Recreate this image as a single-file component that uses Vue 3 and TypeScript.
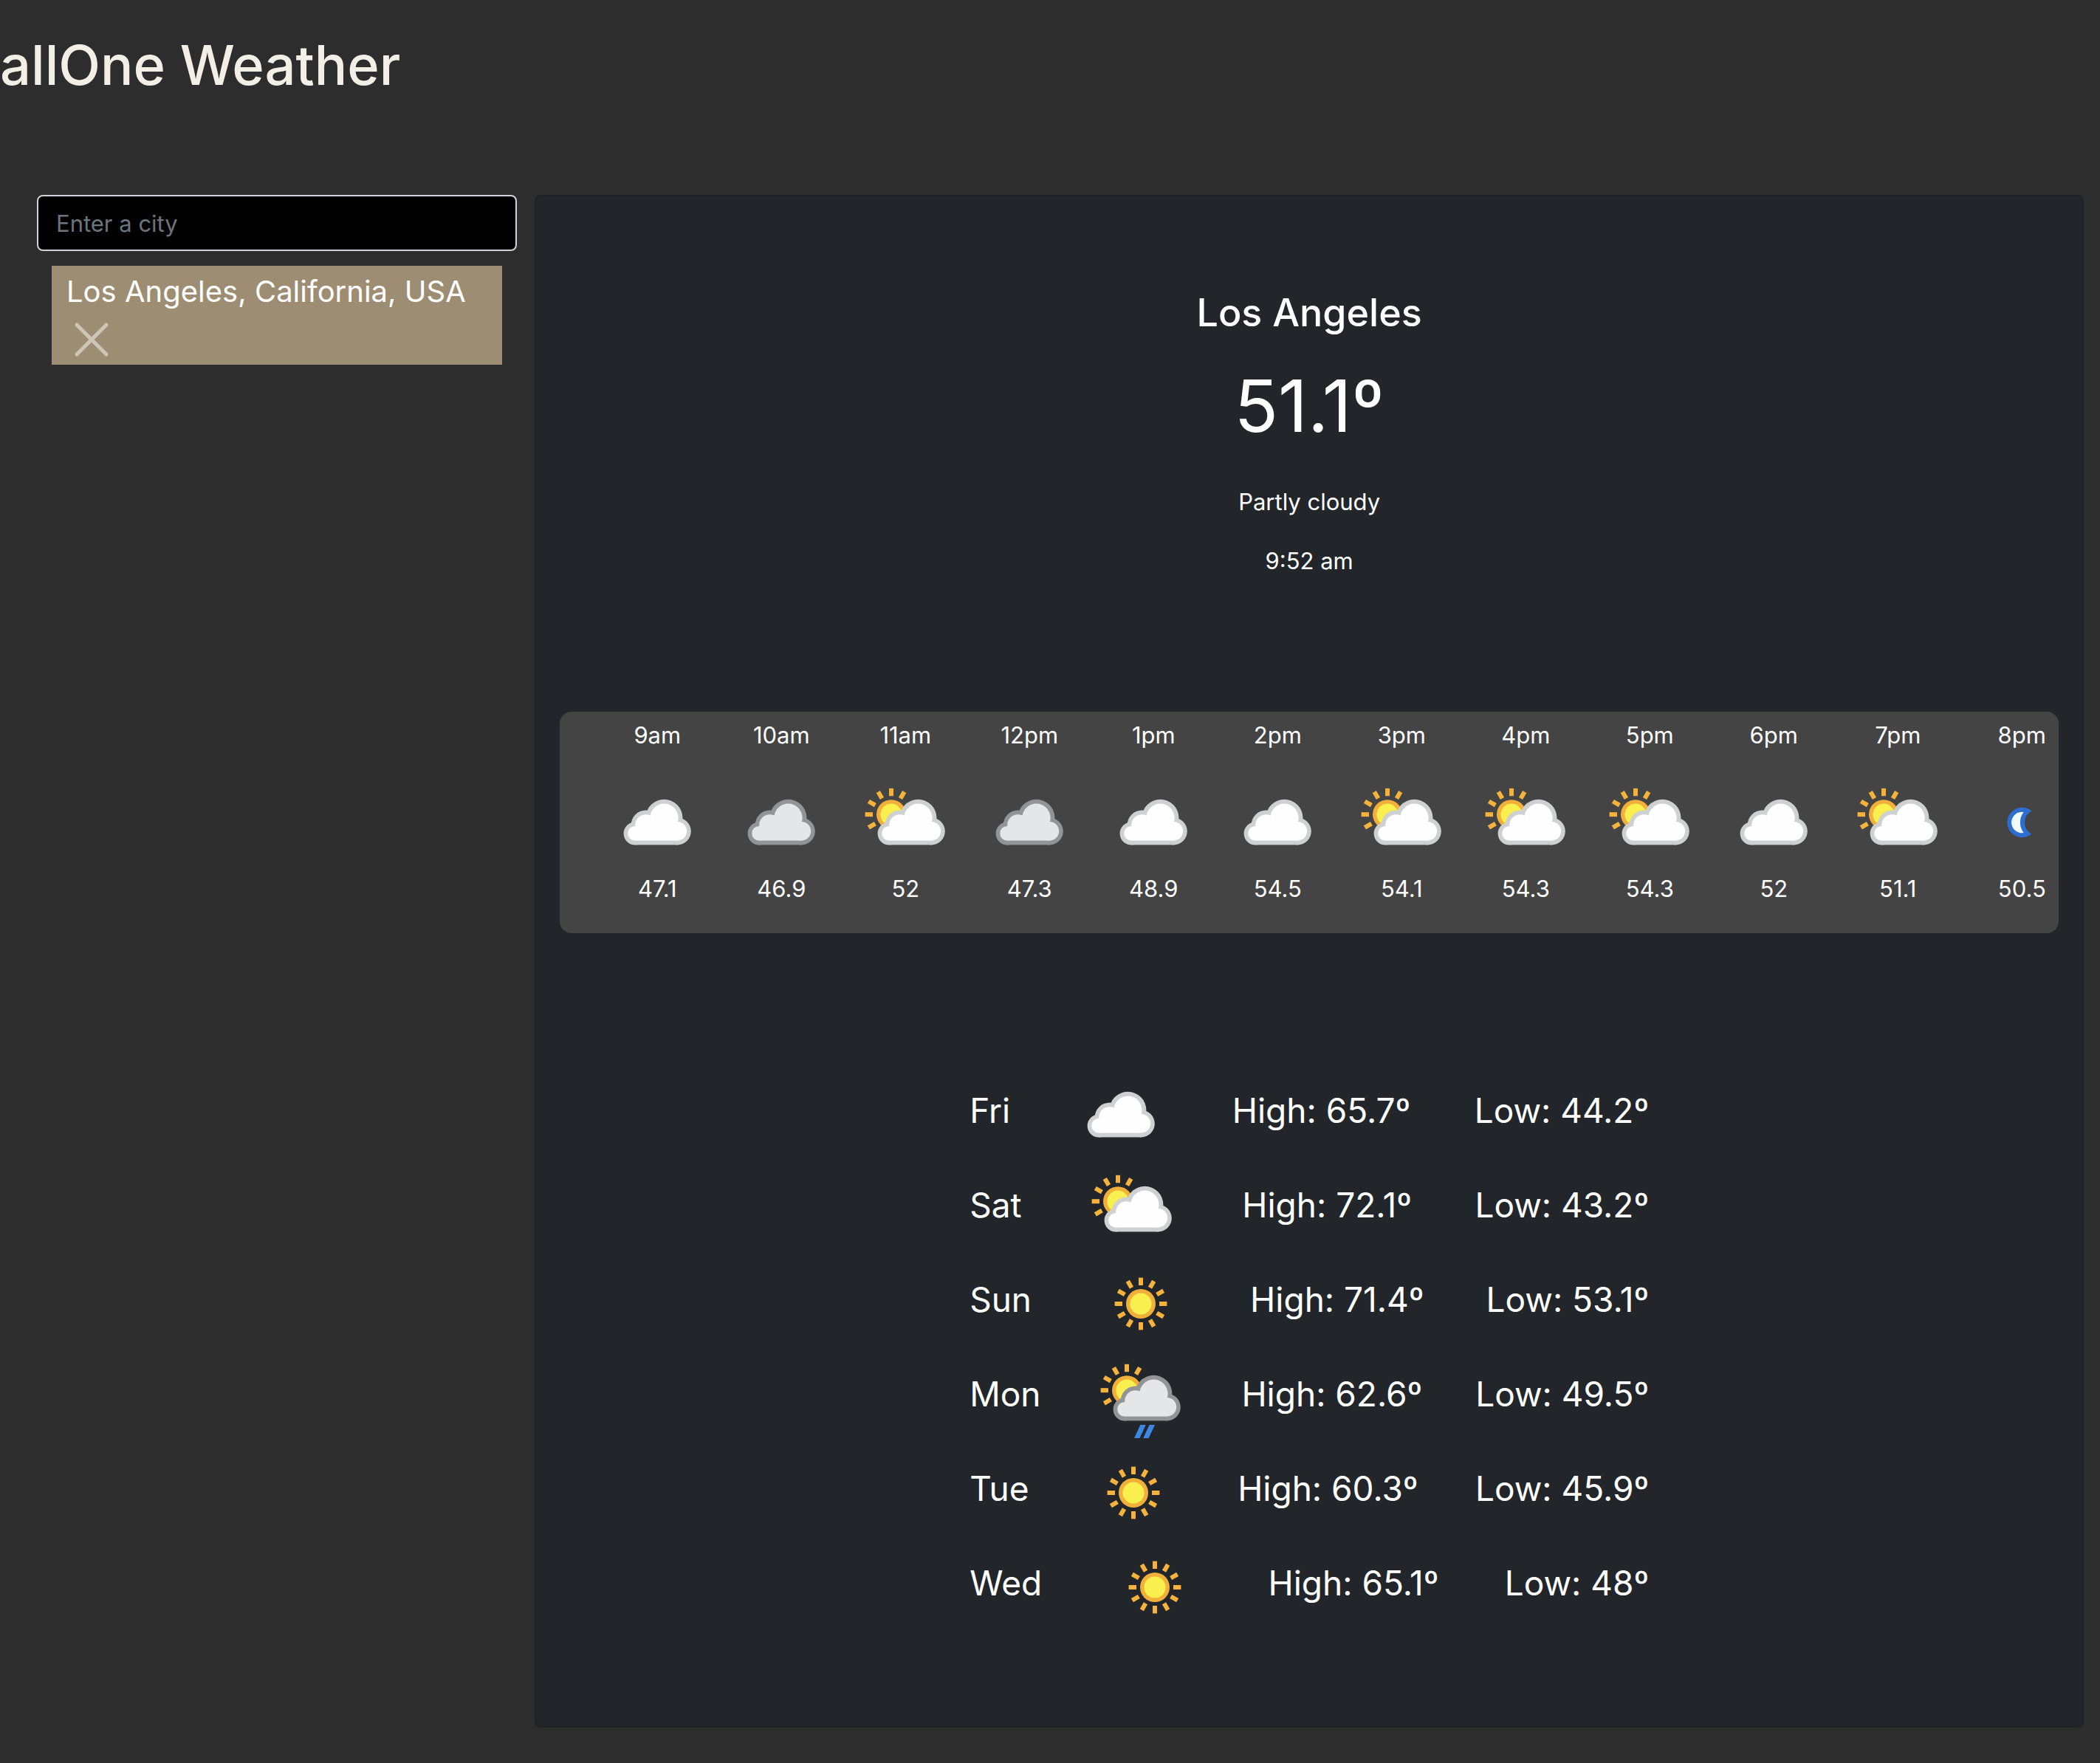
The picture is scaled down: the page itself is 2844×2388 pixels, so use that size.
<script setup lang="ts">
import { ref } from 'vue'

type Icon = 'cloudy' | 'overcast' | 'partly' | 'sunny' | 'showers' | 'night'

interface Hour {
  label: string
  icon: Icon
  temp: number
}

interface Day {
  name: string
  icon: Icon
  high: number
  low: number
}

const query = ref('')
const cities = ref<string[]>(['Los Angeles, California, USA'])

const hours: Hour[] = [
  { label: '9am', icon: 'cloudy', temp: 47.1 },
  { label: '10am', icon: 'overcast', temp: 46.9 },
  { label: '11am', icon: 'partly', temp: 52 },
  { label: '12pm', icon: 'overcast', temp: 47.3 },
  { label: '1pm', icon: 'cloudy', temp: 48.9 },
  { label: '2pm', icon: 'cloudy', temp: 54.5 },
  { label: '3pm', icon: 'partly', temp: 54.1 },
  { label: '4pm', icon: 'partly', temp: 54.3 },
  { label: '5pm', icon: 'partly', temp: 54.3 },
  { label: '6pm', icon: 'cloudy', temp: 52 },
  { label: '7pm', icon: 'partly', temp: 51.1 },
  { label: '8pm', icon: 'night', temp: 50.5 },
]

const days: Day[] = [
  { name: 'Fri', icon: 'cloudy', high: 65.7, low: 44.2 },
  { name: 'Sat', icon: 'partly', high: 72.1, low: 43.2 },
  { name: 'Sun', icon: 'sunny', high: 71.4, low: 53.1 },
  { name: 'Mon', icon: 'showers', high: 62.6, low: 49.5 },
  { name: 'Tue', icon: 'sunny', high: 60.3, low: 45.9 },
  { name: 'Wed', icon: 'sunny', high: 65.1, low: 48 },
]

const rayAngles = Array.from({ length: 12 }, (_, i) => i * 30)

function addCity(): void {
  const name = query.value.trim()
  if (name) cities.value.push(name)
  query.value = ''
}

function removeCity(index: number): void {
  cities.value.splice(index, 1)
}
</script>

<template>
  <div class="page">
    <svg class="sprite" aria-hidden="true">
      <defs>
        <g id="sun-shape">
          <rect
            v-for="angle in rayAngles"
            :key="angle"
            x="-1.5"
            y="-17.7"
            width="3"
            height="5.2"
            fill="#f5b23c"
            :transform="`rotate(${angle})`"
          />
          <circle r="10" fill="#f0b03a" />
          <circle r="7.3" fill="#f9ef4e" />
        </g>
        <g id="cloud-outer">
          <circle cx="17" cy="39.5" r="7.7" />
          <circle cx="45.7" cy="38" r="9.2" />
          <circle cx="36.7" cy="28.9" r="12.5" />
          <circle cx="24.3" cy="33.8" r="10" />
          <rect x="17" y="38" width="28.7" height="9.2" />
        </g>
        <g id="cloud-inner">
          <circle cx="17" cy="39.4" r="4.9" />
          <circle cx="45.7" cy="37.9" r="6.4" />
          <circle cx="36.7" cy="28.9" r="9.6" />
          <circle cx="24.3" cy="33.8" r="7.2" />
          <rect x="17" y="36" width="28.7" height="8.3" />
        </g>
        <symbol id="icon-cloudy" viewBox="0 0 64 64">
          <use href="#cloud-outer" fill="#cfd0d1" />
          <use href="#cloud-inner" fill="#fefefe" />
        </symbol>
        <symbol id="icon-overcast" viewBox="0 0 64 64">
          <use href="#cloud-outer" fill="#939496" />
          <use href="#cloud-inner" fill="#e5e6e8" />
        </symbol>
        <symbol id="icon-sunny" viewBox="0 0 64 64">
          <use href="#sun-shape" transform="translate(32 32)" />
        </symbol>
        <symbol id="icon-partly" viewBox="0 0 64 64">
          <!-- the rays behind the cloud are left out -->
          <clipPath id="upper-left">
            <path d="M0 0H33V20L20 34L13 38H0Z" />
          </clipPath>
          <g clip-path="url(#upper-left)">
            <use href="#sun-shape" transform="translate(22.5 26.6)" />
          </g>
          <use href="#cloud-outer" fill="#cfd0d1" transform="translate(4 0)" />
          <use href="#cloud-inner" fill="#fefefe" transform="translate(4 0)" />
        </symbol>
        <symbol id="icon-showers" viewBox="0 0 64 64">
          <g clip-path="url(#upper-left)">
            <use href="#sun-shape" transform="translate(22.5 26.6)" />
          </g>
          <use href="#cloud-outer" fill="#939496" transform="translate(4 0)" />
          <use href="#cloud-inner" fill="#e5e6e8" transform="translate(4 0)" />
          <path d="M27.5 59L31.7 50H35.4L31.2 59Z M33.6 59L37.8 50H41.5L37.3 59Z" fill="#3d87e0" />
        </symbol>
        <symbol id="icon-night" viewBox="0 0 64 64">
          <path d="M38.7 24.2A10.1 10.1 0 1 0 38.7 39.8A8.8 8.8 0 0 1 38.7 24.2Z" fill="#2c6fd1" />
          <path d="M33.3 25A7.1 7.1 0 1 0 33.3 39A11.5 11.5 0 0 1 33.3 25Z" fill="#eefaff" />
        </symbol>
      </defs>
    </svg>

    <header class="header">
      <h1 class="brand">allOne Weather</h1>
    </header>

    <main class="layout">
      <aside class="sidebar">
        <form @submit.prevent="addCity">
          <input
            v-model="query"
            class="search"
            type="text"
            placeholder="Enter a city"
            aria-label="City"
          />
        </form>
        <ul class="cities">
          <li v-for="(city, index) in cities" :key="city" class="city">
            <span class="city-name">{{ city }}</span>
            <button
              type="button"
              class="remove"
              :aria-label="`Remove ${city}`"
              @click="removeCity(index)"
            >
              <svg class="remove-icon" viewBox="0 0 48 48" aria-hidden="true">
                <path d="M4 4L44 44M44 4L4 44" />
              </svg>
            </button>
          </li>
        </ul>
      </aside>

      <section class="card">
        <h2 class="place">Los Angeles</h2>
        <p class="current">51.1º</p>
        <p class="note">Partly cloudy</p>
        <p class="note">9:52 am</p>

        <ul class="hourly">
          <li v-for="hour in hours" :key="hour.label" class="hour">
            <span>{{ hour.label }}</span>
            <svg class="icon" aria-hidden="true"><use :href="`#icon-${hour.icon}`" /></svg>
            <span>{{ hour.temp }}</span>
          </li>
        </ul>

        <ul class="daily">
          <li v-for="day in days" :key="day.name" class="day">
            <span>{{ day.name }}</span>
            <svg class="icon" aria-hidden="true"><use :href="`#icon-${day.icon}`" /></svg>
            <span>High: {{ day.high }}º</span>
            <span>Low: {{ day.low }}º</span>
          </li>
        </ul>
      </section>
    </main>
  </div>
</template>

<style>
body {
  margin: 0;
  background: #2d2d2d;
}
</style>

<style scoped>
.page {
  min-height: 100vh;
  box-sizing: border-box;
  padding-bottom: 50px;
  background: #2d2d2d;
  color: #fff;
  font-family: Inter, Roboto, sans-serif;
  font-size: 31px;
  line-height: 48px;
}

.page * {
  box-sizing: border-box;
}

.sprite {
  display: block;
  width: 0;
  height: 0;
}

h1,
h2,
p,
ul {
  margin: 0;
  padding: 0;
}

ul {
  list-style: none;
}

.header {
  padding: 40px 0 128px;
}

.brand {
  color: #f4efe6;
  font-size: 74px;
  font-weight: 500;
  line-height: 96px;
}

.layout {
  display: grid;
  grid-template-columns: minmax(0, 31fr) minmax(0, 100fr);
  gap: 24px;
  padding: 0 22px 0 50px;
}

.search {
  display: block;
  width: 100%;
  height: 76px;
  padding: 0 24px;
  border: 2px solid #ced4da;
  border-radius: 8px;
  background: #000;
  color: #fff;
  font: inherit;
}

.search::placeholder {
  color: #6c757d;
  opacity: 1;
}

.cities {
  padding: 20px 20px 0;
}

.city {
  display: flex;
  flex-direction: column;
  align-items: flex-start;
  height: 134px;
  padding: 4px 20px 0;
  background: #9d8e73;
}

.city-name {
  font-size: 40px;
  line-height: 62px;
  white-space: nowrap;
}

.remove {
  margin: 0;
  padding: 10px;
  border: 0;
  background: none;
  cursor: pointer;
}

.remove-icon {
  display: block;
  width: 48px;
  height: 48px;
  fill: none;
  stroke: #cec6b8;
  stroke-width: 5;
  stroke-linecap: round;
}

.card {
  display: flex;
  flex-direction: column;
  align-items: center;
  padding: 126px 32px 124px;
  border: 2px solid #1f2125;
  border-radius: 8px;
  background: #22262b;
}

.place {
  font-size: 52px;
  font-weight: 500;
  line-height: 64px;
}

.current {
  margin: 34px 0 14px;
  font-size: 98px;
  line-height: 120px;
}

.note {
  margin-top: 32px;
}

.hourly {
  display: flex;
  width: 100%;
  height: 300px;
  margin: 180px 0 182px;
  padding: 8px 0 0 48px;
  overflow: hidden;
  border-radius: 16px;
  background: #444;
}

.hour {
  display: flex;
  flex: none;
  flex-direction: column;
  align-items: center;
  width: 128px;
  margin: 0 20px;
}

.icon {
  display: block;
  flex: none;
  width: 128px;
  height: 128px;
}

.hour .icon {
  margin: 30px 0 2px;
}

.daily {
  width: 100%;
  max-width: 920px;
  font-size: 46px;
  line-height: 116px;
}

.day {
  display: flex;
  align-items: flex-start;
  justify-content: space-between;
}
</style>
